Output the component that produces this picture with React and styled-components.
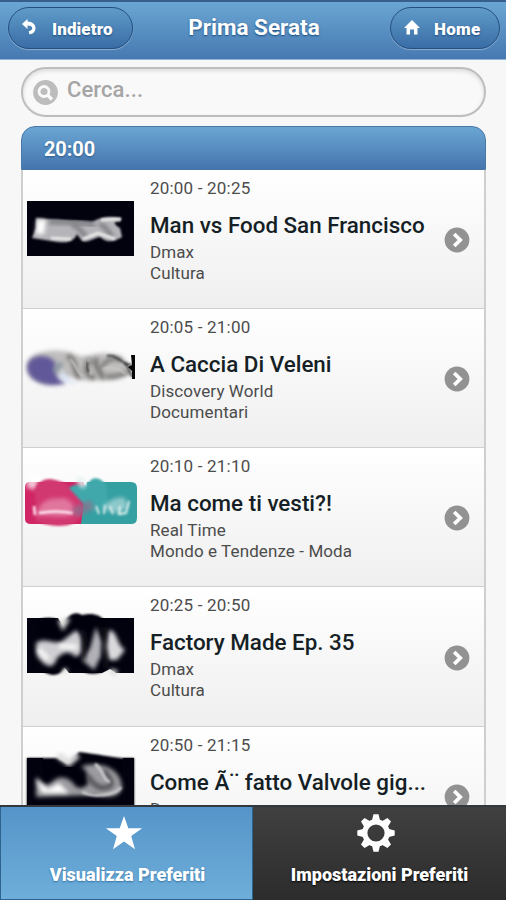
import React from 'react';
import styled, { createGlobalStyle, css } from 'styled-components';

const GlobalStyle = createGlobalStyle`
    * {
        box-sizing: border-box;
    }

    body {
        margin: 0;
        background: #f7f7f7;
        font-family: Roboto, "Liberation Sans", sans-serif;
    }
`;

const Page = styled.div`
    display: flex;
    flex-direction: column;
    height: 900px;
    overflow: hidden;
    background: #f7f7f7;
`;

const HeaderBar = styled.header`
    flex: none;
    display: grid;
    grid-template-columns: 125px 1fr 110px;
    align-items: start;
    height: 60px;
    padding: 5px 6px 0 8px;
    border-top: 2px solid #365f8c;
    border-bottom: 1px solid #8fb8d6;
    background: linear-gradient(#6aa6d3, #4679b1);
    color: white;
`;

const HeaderButton = styled.button`
    display: flex;
    align-items: center;
    height: 42px;
    padding: 1px 0 0 ${props => props.$indent};
    border: 1px solid #245080;
    border-radius: 21px;
    background: linear-gradient(#5f9bc9, #3a6da6);
    box-shadow: 0 1px 1px rgba(255, 255, 255, 0.35);
    color: white;
    font: 900 17px Roboto, sans-serif;
    letter-spacing: ${props => props.$spacing};
    text-shadow: 0 1px 2px #194b7e;

    svg {
        flex: none;
        margin: 0 ${props => props.$gap} 2px 0;
    }
`;

const Title = styled.h1`
    margin: 0;
    padding: 6px 15px 0 0;
    text-align: center;
    font-size: 22.5px;
    line-height: 29px;
    letter-spacing: 0;
    text-shadow: 0 1px 2px #194b7e;
`;

const Content = styled.main`
    flex: 1;
    min-height: 0;
    overflow: hidden;
    padding: 7px 20px 0 21px;
`;

const SearchField = styled.label`
    display: flex;
    align-items: center;
    height: 50px;
    margin-bottom: 9px;
    padding-left: 10px;
    border: 2px solid #bdbdbd;
    border-radius: 25px;
    background: #f9f9f9;
    box-shadow: inset 0 2px 4px rgba(0, 0, 0, 0.12);

    input {
        width: 300px;
        margin: 0 0 6px 9px;
        padding: 0;
        border: 0;
        background: none;
        font: 500 22px Roboto, sans-serif;
        letter-spacing: 0.1px;
    }

    input::placeholder {
        color: #a5a5a5;
        opacity: 1;
    }
`;

const List = styled.ul`
    margin: 0;
    padding: 0;
    list-style: none;
`;

const Divider = styled.li`
    height: 43.5px;
    padding-left: 22px;
    border: 1px solid #4778a8;
    border-radius: 14px 14px 0 0;
    background: linear-gradient(#6aa6d4, #4575ad);
    color: white;
    font-size: 20px;
    font-weight: 700;
    line-height: 44px;
    letter-spacing: -0.1px;
    text-shadow: 0 1px 2px #2b5a8a;
`;

const Row = styled.li`
    display: grid;
    grid-template-columns: 127px 1fr 40px;
    height: 139.3px;
    border: solid #cfcfcf;
    border-width: 0 2px 1px;
    background: linear-gradient(#ffffff, #efefef);
`;

const Logo = styled.svg`
    display: block;
    width: 116px;
    height: 76px;
    margin: 19px 0 0;
    overflow: hidden;
`;

const Info = styled.div`
    min-width: 0;
    padding-top: 8px;
    color: #4c4c4c;
`;

const Detail = styled.p`
    margin: 0;
    font-size: 17px;
    line-height: 21px;
    letter-spacing: ${props => props.$spacing || '0'};
    white-space: nowrap;
`;

const Programme = styled.h2`
    width: 280px;
    margin: 12px 0 3px;
    overflow: hidden;
    color: #151f25;
    font-size: 22.4px;
    font-weight: 500;
    line-height: 28px;
    letter-spacing: 0;
    text-overflow: ellipsis;
    white-space: nowrap;
`;

const Arrow = styled.svg`
    align-self: center;
    margin-top: 2px;
`;

const Footer = styled.footer`
    flex: none;
    display: grid;
    grid-template-columns: 1fr 1fr;
    height: 95px;
    border-top: 2px solid #303940;
`;

const Tab = styled.button`
    display: flex;
    flex-direction: column;
    align-items: center;
    padding: 7px 0 0;
    border: 0;
    background: linear-gradient(#404040, #2c2c2c);
    color: white;
    font: 900 18px Roboto, sans-serif;
    text-shadow: 0 1px 2px #000;

    ${props => props.$active && css`
        padding-left: 2px;
        border: solid #2d648e;
        border-width: 0 1px 1px;
        background: linear-gradient(#5594c8, #6eaeda);
        text-shadow: 0 1px 2px #3373a5;
    `}

    svg {
        margin-right: 8px;
    }

    span {
        margin-top: 11px;
        line-height: 24px;
    }
`;

const BackIcon = () => (
    <svg width="15" height="17" viewBox="0 0 15 17">
        <path d="M0 5L5.5 0V2.6C10.5 2.6 13.5 5.6 13.5 9.3C13.5 12.8 11 15 7.5 15.4L6.8 12.3C9 11.8 10.3 10.7 10.3 9C10.3 7.2 8.5 6.4 5.5 6.4V10Z" fill="white" />
    </svg>
);

const HomeIcon = () => (
    <svg width="16" height="15" viewBox="0 0 16 15">
        <path d="M8 0L16 8H13.5V14.5H10V9.5H6V14.5H2.5V8H0Z" fill="white" />
    </svg>
);

const SearchIcon = () => (
    <svg width="25" height="25" viewBox="0 0 25 25">
        <circle cx="12.5" cy="12.5" r="12.4" fill="#bdbdbd" />
        <circle cx="11" cy="11.5" r="5" fill="none" stroke="#fafafa" strokeWidth="2.8" />
        <path d="M14.5 15L19 19.5" stroke="#fafafa" strokeWidth="3.2" />
    </svg>
);

const StarIcon = () => (
    <svg width="38" height="38" viewBox="0 0 38 38">
        <path d="M19 2L23.3 14.2H37.2L26.2 22L30 35.3L19 27.6L8 35.3L11.8 22L.8 14.2H14.7Z" fill="white" />
    </svg>
);

const GearIcon = () => (
    <svg width="38" height="38" viewBox="-19 -19 38 38">
        {[0, 45, 90, 135, 180, 225, 270, 315].map(angle => (
            <path key={angle} d="M-4.2 -12L-2.5 -18.7H2.5L4.2 -12Z" fill="white" transform={`rotate(${angle})`} />
        ))}
        <circle r="11.2" fill="none" stroke="white" strokeWidth="5.2" />
    </svg>
);

const ArrowIcon = () => (
    <Arrow width="26" height="26" viewBox="0 0 26 26">
        <circle cx="13" cy="13" r="12.4" fill="#929292" />
        <path d="M10.2 7L16.2 13L10.2 19" fill="none" stroke="white" strokeWidth="3.8" />
    </Arrow>
);

const DmaxLogo = () => (
    <Logo viewBox="0 0 116 76">
        <defs>
            <filter id="soft" x="-30%" y="-30%" width="160%" height="160%"><feGaussianBlur stdDeviation="1" /></filter>
            <filter id="softer" x="-50%" y="-50%" width="200%" height="200%"><feGaussianBlur stdDeviation="2" /></filter>
        </defs>
        <path d="M4 12H111V67H4Z" fill="#02020f" />
        <path d="M13 29C33 31 48 31 69 33C82 26 90 28 98 29L97 33C89 31 91 36 97 39L99 48C91 53 84 54 77 48C72 48 66 54 59 52L54 45C51 53 43 54 35 53L9 49L13 39Z" fill="#b5b5b9" filter="url(#soft)" />
        <path d="M14 31H23L21 45H13Z" fill="white" filter="url(#softer)" />
        <path d="M26 33C45 33 58 33 72 36" stroke="#76767c" strokeWidth="4" fill="none" filter="url(#softer)" />
        <path d="M49 37C57 36 57 44 64 48M76 35C85 37 83 44 90 47" fill="none" stroke="#77777d" strokeWidth="4" filter="url(#softer)" />
        <path d="M28 49L48 50M60 50L75 44L92 50M78 31L98 30" fill="none" stroke="#eee" strokeWidth="2.5" filter="url(#soft)" />
    </Logo>
);

const DiscoveryLogo = () => (
    <Logo viewBox="0 0 116 76">
        <path d="M7 30C18 20 42 21 54 27C62 31 73 23 89 26C99 28 103 32 105 38V47C93 54 83 52 71 52C56 54 52 48 40 49C36 60 12 57 6 46C3 41 4 34 7 30Z" fill="#a09e9d" opacity=".65" filter="url(#softer)" />
        <path d="M7 32C16 25 29 28 33 36C29 43 33 49 43 55C29 60 10 55 6 46C3 40 4 36 7 32Z" fill="#615998" filter="url(#softer)" />
        <path d="M38 38C41 48 48 53 57 57C50 56 41 54 34 49C38 47 39 43 38 38Z" fill="#d9e3f4" filter="url(#softer)" />
        <path d="M31 43L39 35" stroke="#718797" strokeWidth="5" opacity=".7" filter="url(#softer)" />
        <path d="M44 28C55 32 48 40 57 50M67 31C60 41 64 48 72 50M74 30C69 38 79 43 80 51" fill="none" stroke="#757371" strokeWidth="5" filter="url(#softer)" />
        <path d="M78 40C84 29 97 29 98 33M83 48C95 51 99 44 107 44" fill="none" stroke="#777573" strokeWidth="4" filter="url(#softer)" />
        <path d="M47 31C53 36 53 43 60 49M66 31C63 37 65 42 69 47M80 41C90 37 97 41 103 46" fill="none" stroke="#c9c8c7" strokeWidth="2" filter="url(#soft)" />
        <path d="M65 34C63 38 64 41 66 44" fill="none" stroke="#222" strokeWidth="1.7" filter="url(#soft)" />
        <path d="M84 28C94 26 96 35 109 37M101 35C108 40 105 45 110 49" fill="none" stroke="#343434" strokeWidth="1.8" filter="url(#soft)" />
        <path d="M108 27H112V51H109V43L105 39L109 37Z" fill="#050505" />
    </Logo>
);

const RealTimeLogo = () => (
    <Logo viewBox="0 0 116 76">
        <path d="M7 15H60L69 42L59 57H8Q2 57 2 52V20Q2 15 7 15Z" fill="#d02665" />
        <path d="M64 15H108Q114 15 114 21V51Q114 57 108 57H58Z" fill="#35a0a2" />
        <path d="M6 8H17L12 23L3 20Z" fill="#fff" opacity=".75" filter="url(#softer)" />
        <path d="M12 23C20 7 31 12 43 17L58 32L57 51C49 62 25 60 13 54Z" fill="#d23870" filter="url(#soft)" />
        <path d="M46 21C53 14 61 21 65 17C70 7 79 12 83 18L85 42C72 47 71 43 66 43Z" fill="#41a8ab" filter="url(#soft)" />
        <path d="M57 9L63 17L60 22L53 14Z" fill="#e1f1f1" filter="url(#softer)" />
        <path d="M17 39C26 29 31 33 40 31C51 33 53 43 50 48C35 52 24 47 12 49Z" fill="#e68bac" opacity=".75" filter="url(#softer)" />
        <path d="M11 39L12 48M16 46C26 44 39 44 50 46" fill="none" stroke="#ffe6ef" strokeWidth="2.5" filter="url(#soft)" />
        <path d="M80 40C87 33 94 29 102 31L105 40L97 46L86 44Z" fill="#a5d4d5" opacity=".8" filter="url(#softer)" />
        <path d="M73 39L76 47M82 38L81 47M87 39L90 47M97 39L96 47L103 46L106 34" fill="none" stroke="#dcefef" strokeWidth="2" filter="url(#soft)" />
        <path d="M51 46L69 37" stroke="#8b7290" strokeWidth="10" opacity=".75" filter="url(#softer)" />
    </Logo>
);

const FactoryLogo = () => (
    <Logo viewBox="0 0 116 76">
        <path d="M4 12H35L40 21L45 12H111V67H93L87 63L79 67H46L41 61L32 67H4Z" fill="#02020f" />
        <path d="M13 15C25 9 37 12 39 20C45 8 52 5 59 9C69 7 76 8 82 15L83 63C74 71 62 68 55 62L43 61C36 72 25 70 19 64Z" fill="#05050d" filter="url(#soft)" />
        <path d="M13 37C22 31 29 38 38 36L52 25C58 24 59 34 59 47L53 51C45 44 41 46 34 52C31 63 24 63 14 50Z" fill="#cfcfd3" filter="url(#softer)" />
        <path d="M73 21L79 36L78 50L71 64L59 54L67 42Z" fill="#b1b1b7" filter="url(#softer)" />
        <path d="M86 24C95 25 93 38 102 44L94 54H86L82 41Z" fill="#dadadd" filter="url(#softer)" />
        <path d="M36 40L54 41M15 43L25 53" stroke="white" strokeWidth="4" filter="url(#softer)" />
        <path d="M37 14L40 20L45 12M41 63L43 67M87 65L94 67" fill="none" stroke="#ddd" strokeWidth="5" filter="url(#softer)" />
        <path d="M58 24C66 31 59 41 61 54M81 21L83 62" fill="none" stroke="#16161d" strokeWidth="3" filter="url(#softer)" />
    </Logo>
);

const CaveLogo = () => (
    <Logo viewBox="0 0 116 76">
        <path d="M4 12H34L45 18L56 6C74 8 89 11 98 12H111V67H4Z" fill="#02020f" filter="url(#soft)" />
        <path d="M4 12H20V67H4ZM100 12H111V67H4V52H100Z" fill="#02020f" />
        <path d="M13 31C19 35 20 43 29 36C36 29 45 31 50 37C54 44 60 43 65 38C66 30 64 25 58 20C78 15 99 22 99 42C96 53 84 51 71 49L13 51Z" fill="#9c9ca0" filter="url(#softer)" />
        <path d="M13 33L19 47H46L36 37L25 43Z" fill="#fff" filter="url(#softer)" />
        <path d="M65 30C70 39 77 44 86 41C92 37 84 28 80 24" fill="none" stroke="#515157" strokeWidth="5" filter="url(#softer)" />
        <path d="M72 18C83 27 79 34 87 36M59 46C72 52 93 49 98 41" fill="none" stroke="#c8c8cb" strokeWidth="3" filter="url(#soft)" />
        <path d="M35 9L46 17L55 9" fill="none" stroke="#ddd" strokeWidth="6" filter="url(#softer)" />
    </Logo>
);

const programmes = [
    { time: '20:00 - 20:25', title: 'Man vs Food San Francisco', channel: 'Dmax', genre: 'Cultura', logo: DmaxLogo },
    { time: '20:05 - 21:00', title: 'A Caccia Di Veleni', channel: 'Discovery World', genre: 'Documentari', logo: DiscoveryLogo },
    { time: '20:10 - 21:10', title: 'Ma come ti vesti?!', channel: 'Real Time', genre: 'Mondo e Tendenze - Moda', logo: RealTimeLogo },
    { time: '20:25 - 20:50', title: 'Factory Made Ep. 35', channel: 'Dmax', genre: 'Cultura', logo: FactoryLogo },
    { time: '20:50 - 21:15', title: 'Come Ã¨ fatto Valvole gig...', channel: 'Dmax', genre: 'Cultura', logo: CaveLogo },
];

const ProgrammeRow = ({ item }) => {
    const ChannelLogo = item.logo;

    return (
        <Row>
            <ChannelLogo />
            <Info>
                <Detail $spacing="0.2px">{item.time}</Detail>
                <Programme>{item.title}</Programme>
                <Detail $spacing="0.1px">{item.channel}</Detail>
                <Detail $spacing="0.1px">{item.genre}</Detail>
            </Info>
            <ArrowIcon />
        </Row>
    );
};

const App = () => (
    <>
        <GlobalStyle />
        <Page>
            <HeaderBar>
                <HeaderButton $indent="13px" $gap="15px" $spacing="0.1px"><BackIcon />Indietro</HeaderButton>
                <Title>Prima Serata</Title>
                <HeaderButton $indent="13px" $gap="14px" $spacing="0.3px"><HomeIcon />Home</HeaderButton>
            </HeaderBar>
            <Content>
                <SearchField>
                    <SearchIcon />
                    <input placeholder="Cerca..." />
                </SearchField>
                <List>
                    <Divider>20:00</Divider>
                    {programmes.map(item => <ProgrammeRow key={item.time} item={item} />)}
                </List>
            </Content>
            <Footer>
                <Tab $active><StarIcon /><span>Visualizza Preferiti</span></Tab>
                <Tab><GearIcon /><span>Impostazioni Preferiti</span></Tab>
            </Footer>
        </Page>
    </>
);

export default App;
